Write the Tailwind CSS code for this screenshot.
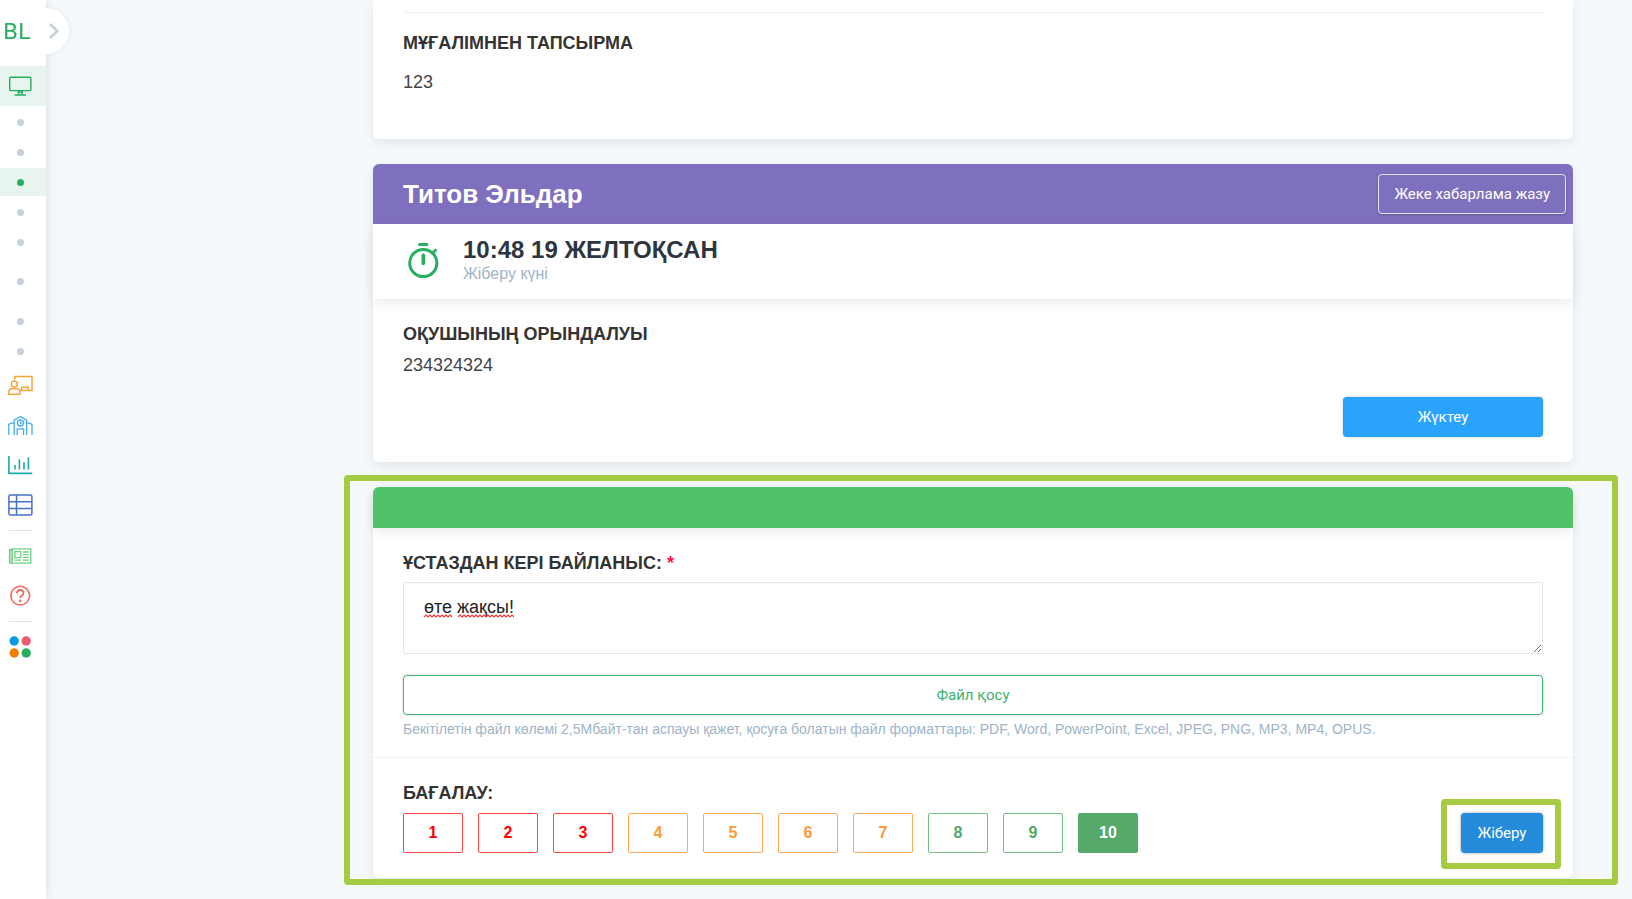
<!DOCTYPE html>
<html lang="kk">
<head>
  <meta charset="UTF-8" />
  <title>BilimLand | Тапсырма</title>
  <meta name="viewport" content="width=device-width, initial-scale=1.0" />
  <script src="https://cdn.jsdelivr.net/npm/@tailwindcss/browser@4"></script>
</head>

<body class="bg-[#f5f9fc] min-h-screen font-['Liberation_Sans',sans-serif] text-[#333]">

  <!-- Sidebar -->
  <aside class="fixed inset-y-0 left-0 z-10 w-[46px] bg-white shadow-[0_0_10px_rgba(0,0,0,0.12)]">
    <button type="button" aria-label="Мәзірді ашу" class="absolute top-2 left-[23px] size-[46px] rounded-full bg-white flex items-center justify-end pr-[10px] shadow-[2px_0_4px_rgba(0,0,0,0.05)]">
      <svg class="w-[10px] h-4" viewBox="0 0 10 16" fill="none" stroke="#c3cfda" stroke-width="2.4"><path d="M1 1l7.5 7L1 15" /></svg>
    </button>

    <nav class="relative flex flex-col">
      <a href="#" class="h-[66px] w-10 pb-1 pl-[3px] flex items-center text-[22px] text-[#27ae60] font-['DejaVu_Sans',sans-serif]">BL</a>

      <a href="#" aria-label="Сабақтар" class="h-10 pr-1 flex items-center justify-center bg-[#e8f5ee]">
        <svg class="size-[26px]" viewBox="0 0 26 26" fill="none" stroke="#27ae60" stroke-width="1.4"><rect x="1.7" y="4.2" width="21.2" height="13.4" rx="1.2" /><path d="M10.6 17.6v4M14 17.6v4M6.5 22h11.5M9.5 19h5.6" /></svg>
      </a>
      <a href="#" aria-label="Бөлім 1" class="h-[30px] mt-px pr-[5px] flex items-center justify-center"><span class="size-[7px] rounded-full bg-[#c5d1dc]"></span></a>
      <a href="#" aria-label="Бөлім 2" class="h-[30px] pr-[5px] flex items-center justify-center"><span class="size-[7px] rounded-full bg-[#c5d1dc]"></span></a>
      <a href="#" aria-label="Бөлім 3" class="h-7 my-px pr-[5px] flex items-center justify-center bg-[#e8f5ee]"><span class="size-[7px] rounded-full bg-[#27ae60]"></span></a>
      <a href="#" aria-label="Бөлім 4" class="h-[30px] pr-[5px] flex items-center justify-center"><span class="size-[7px] rounded-full bg-[#c5d1dc]"></span></a>
      <a href="#" aria-label="Бөлім 5" class="h-[30px] pr-[5px] flex items-center justify-center"><span class="size-[7px] rounded-full bg-[#c5d1dc]"></span></a>
      <a href="#" aria-label="Бөлім 6" class="h-[30px] mt-[9px] pr-[5px] flex items-center justify-center"><span class="size-[7px] rounded-full bg-[#c5d1dc]"></span></a>
      <a href="#" aria-label="Бөлім 7" class="h-[30px] mt-[10px] pr-[5px] flex items-center justify-center"><span class="size-[7px] rounded-full bg-[#c5d1dc]"></span></a>
      <a href="#" aria-label="Бөлім 8" class="h-[30px] pr-[5px] flex items-center justify-center"><span class="size-[7px] rounded-full bg-[#c5d1dc]"></span></a>

      <a href="#" aria-label="Мұғалім" class="h-10 -mt-px pr-1 flex items-center justify-center">
        <svg class="size-[26px]" viewBox="0 0 26 26" fill="none" stroke="#f7a63c" stroke-width="1.5"><path d="M6.8 7.5V4.4H24v14.2H12M13.7 18.6v-3.4h6.6v3.4" /><circle cx="6.3" cy="12" r="3" /><path d="M.8 22.2v-2q0-3.4 3.2-3.4h4.8q3.2 0 3.2 3.4v2z" /></svg>
      </a>
      <a href="#" aria-label="Мектеп" class="h-10 pr-1 flex items-center justify-center">
        <svg class="size-[26px]" viewBox="0 0 26 26" fill="none" stroke="#42a9f5" stroke-width="1.3"><path d="M.8 23V12.5l2.4-1.3h3.4M24 23V12.5l-2.4-1.3h-3.4M6.2 23V8.2l6.2-3.7 6.2 3.7V23M9.2 23v-6.2h6.4V23" /><circle cx="12.4" cy="11" r="3" /><path d="M12.4 9.5V11h1.5" /></svg>
      </a>
      <a href="#" aria-label="Статистика" class="h-10 pr-1 flex items-center justify-center">
        <svg class="size-[26px]" viewBox="0 0 26 26" fill="none" stroke="#1cabab" stroke-width="1.6"><path d="M.9 4v17.4h23.3M7 13v4.6M11.4 7.2v10.4M16 10.2v7.4M20.4 5.6v12" /></svg>
      </a>
      <a href="#" aria-label="Журнал" class="h-10 pr-1 flex items-center justify-center">
        <svg class="size-[26px]" viewBox="0 0 26 26" fill="none" stroke="#4472c9" stroke-width="1.5"><rect x=".9" y="2.9" width="23" height="20.2" rx="1.6" /><path d="M.9 9.7H24M.9 16.4H24M8.5 3v20" /></svg>
      </a>
      <hr class="w-6 ml-[9px] my-[5px] border-[#dfe3e8]" />
      <a href="#" aria-label="Жаңалықтар" class="h-10 pr-1 flex items-center justify-center">
        <svg class="size-[26px]" viewBox="0 0 26 26" fill="none" stroke="#6fd083" stroke-width="1.3"><path d="M4.2 5.8h18.6v14.4H3.2Q1.6 20.2 1.6 18.4V7h2.6z" /><path d="M1.6 7h2.6v11.5q0 1.7-1.2 1.7-1.4 0-1.4-1.7z" fill="#bfe9c7" /><rect x="6.8" y="8.6" width="6" height="6" /><path d="M15 9h5.8M15 11.7h5.8M15 14.4h5.8M6.5 17.2h6.5M15 17.2h5.8" /></svg>
      </a>
      <a href="#" aria-label="Көмек" class="h-10 pr-1 flex items-center justify-center">
        <svg class="size-[26px]" viewBox="0 0 26 26" fill="none" stroke="#f36a60" stroke-width="1.6"><circle cx="12.2" cy="12.6" r="9.4" /><path d="M8.9 10.4q.1-3.4 3.3-3.4t3.3 3q0 1.7-1.8 2.7-1.5.8-1.5 2.4" stroke-width="1.8" /><circle cx="12.2" cy="17.8" r=".6" /></svg>
      </a>
      <hr class="w-6 ml-[9px] my-[5px] border-[#dfe3e8]" />
      <a href="#" aria-label="Қосымшалар" class="h-10 pr-1 flex items-center justify-center">
        <svg class="size-[26px]" viewBox="0 0 26 26"><circle cx="6.2" cy="7" r="4.7" fill="#039be5" /><circle cx="18.2" cy="7" r="4.7" fill="#ec5a74" /><circle cx="6.2" cy="19" r="4.7" fill="#f57c00" /><circle cx="18.2" cy="19" r="4.7" fill="#27ae60" /></svg>
      </a>
    </nav>
  </aside>

  <main class="pl-[373px] pr-[59px] pb-5 flex flex-col gap-[25px]">

    <!-- Teacher's task -->
    <section class="bg-white rounded-b-md px-[30px] pt-3 pb-[45px] shadow-[0_4px_12px_rgba(0,0,0,0.08)]">
      <hr class="border-[#eef0f2]" />
      <h2 class="mt-[18px] text-[18px] leading-6 font-bold">МҰҒАЛІМНЕН ТАПСЫРМА</h2>
      <p class="mt-[15px] text-[18px] leading-6 text-[#444]">123</p>
    </section>

    <!-- Student's answer -->
    <section class="bg-white rounded-md shadow-[0_4px_12px_rgba(0,0,0,0.08)]">
      <header class="h-[60px] pl-[30px] pr-[7px] rounded-t-md bg-[#7f6fbf] flex items-center justify-between">
        <h1 class="text-[26px] leading-8 font-bold text-white">Титов Эльдар</h1>
        <button type="button" class="h-10 px-[15px] rounded border border-white/80 text-[15px] text-white font-[Roboto,sans-serif] shadow-[0_1px_3px_rgba(0,0,0,0.2)]">Жеке хабарлама жазу</button>
      </header>
      <div class="h-[75px] px-[30px] flex items-center shadow-[0_4px_12px_rgba(0,0,0,0.08)]">
        <svg class="w-10 h-10 shrink-0" viewBox="0 0 40 40" fill="none" stroke="#27ae60" stroke-width="3"><circle cx="20.3" cy="21" r="13.6" /><path d="M20.3 13.2v8.2" stroke-width="3.6" stroke-linecap="round" /><path d="M16.5 2.6h7.4" stroke-linecap="round" /><path d="M29.5 11.2l3-3" stroke-linecap="round" /></svg>
        <div class="ml-5 pb-1">
          <p class="text-[24px] leading-7 font-bold text-[#2d3540]">10:48 19 ЖЕЛТОҚСАН</p>
          <p class="text-[16px] leading-5 text-[#a0b4c8]">Жіберу күні</p>
        </div>
      </div>
      <div class="px-[30px] pt-[23px] pb-[25px]">
        <h2 class="text-[18px] leading-6 font-bold">ОҚУШЫНЫҢ ОРЫНДАЛУЫ</h2>
        <p class="mt-[7px] text-[18px] leading-6 text-[#444]">234324324</p>
        <div class="mt-5 flex justify-end">
          <button type="button" class="w-[200px] h-10 rounded bg-[#2aa3ff] text-[15px] text-white font-[Roboto,sans-serif] shadow-[0_0_2px_rgba(0,0,0,0.3)]">Жүктеу</button>
        </div>
      </div>
    </section>

    <!-- Feedback form -->
    <form class="relative bg-white rounded-md shadow-[0_4px_12px_rgba(0,0,0,0.08)]">
      <div class="h-[41px] rounded-t-md bg-[#50c26a] shadow-[0_4px_12px_rgba(0,0,0,0.08)]"></div>
      <div class="px-[30px] pt-[23px] pb-[18px]">
        <label for="feedback" class="block text-[18px] leading-6 font-bold">ҰСТАЗДАН КЕРІ БАЙЛАНЫС: <span class="text-[#ff0f50]">*</span></label>
        <div class="relative mt-[7px]">
          <textarea id="feedback" name="feedback" spellcheck="true" class="block w-full h-[72px] rounded-xs border border-[#e3e6e9] px-5 py-3 text-[18px] leading-6 text-[#222]">өте жақсы!</textarea>
          <!-- spelling marks under both words -->
          <svg class="absolute left-[21px] top-8 w-[90px] h-1 pointer-events-none" viewBox="0 0 90 4" fill="none" stroke="#f33" stroke-width="1.1"><path d="M0 3l2-2 2 2 2-2 2 2 2-2 2 2 2-2 2 2 2-2 2 2 2-2 2 2 2-2 2 2M34 3l2-2 2 2 2-2 2 2 2-2 2 2 2-2 2 2 2-2 2 2 2-2 2 2 2-2 2 2 2-2 2 2 2-2 2 2 2-2 2 2 2-2 2 2 2-2 2 2 2-2 2 2 2-2 2 2" /></svg>
        </div>
        <button type="button" class="block w-full h-10 mt-[21px] rounded border border-[#45b678] text-[15px] text-[#3cb371] font-[Roboto,sans-serif] shadow-[0_0_3px_rgba(0,0,0,0.2)]">Файл қосу</button>
        <p class="mt-1 text-[14px] leading-5 text-[#a0b4c8]">Бекітілетін файл көлемі 2,5Мбайт-тан аспауы қажет, қосуға болатын файл форматтары: PDF, Word, PowerPoint, Excel, JPEG, PNG, MP3, MP4, OPUS.</p>
      </div>
      <hr class="border-[#eef0f2]" />
      <div class="px-[30px] pt-[23px] pb-[25px]">
        <h2 class="text-[18px] leading-6 font-bold">БАҒАЛАУ:</h2>
        <div class="mt-2 flex items-center justify-between">
          <div class="flex gap-[15px] text-[16px] font-bold">
            <button type="button" class="w-[60px] h-10 rounded-xs border border-[#ff4040] text-[#ff0000]">1</button>
            <button type="button" class="w-[60px] h-10 rounded-xs border border-[#ff4040] text-[#ff0000]">2</button>
            <button type="button" class="w-[60px] h-10 rounded-xs border border-[#ff4040] text-[#ff0000]">3</button>
            <button type="button" class="w-[60px] h-10 rounded-xs border border-[#fbab58] text-[#fa9938]">4</button>
            <button type="button" class="w-[60px] h-10 rounded-xs border border-[#fbab58] text-[#fa9938]">5</button>
            <button type="button" class="w-[60px] h-10 rounded-xs border border-[#fbab58] text-[#fa9938]">6</button>
            <button type="button" class="w-[60px] h-10 rounded-xs border border-[#fbab58] text-[#fa9938]">7</button>
            <button type="button" class="w-[60px] h-10 rounded-xs border border-[#78bc88] text-[#55a868]">8</button>
            <button type="button" class="w-[60px] h-10 rounded-xs border border-[#78bc88] text-[#55a868]">9</button>
            <button type="button" aria-pressed="true" class="w-[60px] h-10 rounded-xs border border-[#55aa69] bg-[#55aa69] text-white">10</button>
          </div>
          <div class="relative">
            <button type="submit" class="block w-[82px] h-10 rounded bg-[#248cdb] text-[15px] text-white font-[Roboto,sans-serif] shadow-[0_0_3px_rgba(0,0,0,0.4)]">Жіберу</button>
            <div class="absolute -left-5 -right-[18px] -top-[14px] -bottom-4 border-6 border-[#a4cb42] rounded-sm pointer-events-none"></div>
          </div>
        </div>
      </div>
      <!-- highlight frame -->
      <div class="absolute -left-[29px] -right-[45px] -top-3 -bottom-[7px] border-6 border-[#a4cb42] rounded-sm pointer-events-none"></div>
    </form>

  </main>

</body>
</html>
